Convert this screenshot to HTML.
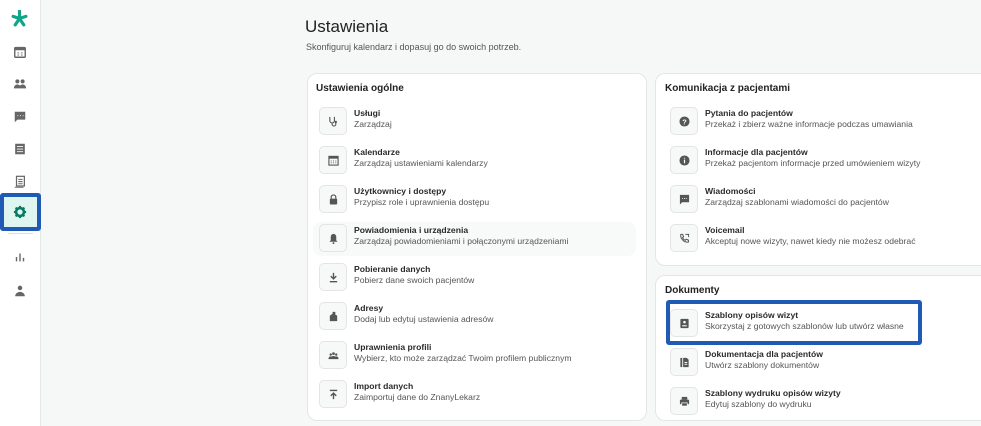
<!DOCTYPE html><html><head><meta charset="utf-8"><style>
*{margin:0;padding:0;box-sizing:border-box}
html,body{width:981px;height:426px;overflow:hidden}
body{background:#f6f7f7;font-family:"Liberation Sans",sans-serif;color:#222;position:relative}
.side{position:absolute;left:0;top:0;width:41px;height:426px;background:#fff;border-right:1px solid #e6e8e8}
.si{position:absolute;left:13px;width:14px;height:14px}
.card{position:absolute;background:#fff;border:1px solid #e4e6e6;border-radius:10px}
.h{position:absolute;font-size:10px;font-weight:bold;color:#222}
.it{position:absolute;height:30px}
.ib{position:absolute;left:0;top:0;width:28px;height:28px;border:1px solid #e3e5e5;border-radius:5px;background:#f7f8f8}
.ib svg{position:absolute;left:8px;top:8px;width:11px;height:11px}
.t{position:absolute;left:35px;top:1px;font-size:8.6px;font-weight:bold;white-space:nowrap;color:#2a2a2a}
.d{position:absolute;left:35px;top:12px;font-size:8.6px;color:#555;white-space:nowrap}
</style></head><body>
<div class="side">
<svg class="si" style="top:10px;left:11px;width:17px;height:17px" viewBox="0 0 16 16"><path d="M8 1v6M2 6l6 2 6-2M8 8l-4 6M8 8l4 6" stroke="#12a38a" stroke-width="3" stroke-linecap="round" fill="none"/></svg>
<svg class="si" style="top:45px" viewBox="0 0 16 16"><rect x="2" y="3" width="12" height="11" rx="1" fill="none" stroke="#666" stroke-width="1.6"/><rect x="2" y="3" width="12" height="3" fill="#666"/><path d="M5 9h2M9 9h2M5 11.5h2M9 11.5h2" stroke="#666"/></svg>
<svg class="si" style="top:77px" viewBox="0 0 16 16"><circle cx="5" cy="5" r="2.3" fill="#666"/><circle cx="11" cy="5" r="2.3" fill="#666"/><path d="M1 13c0-3 2-4.5 4-4.5s4 1.5 4 4.5zM7 13c0-3 2-4.5 4-4.5s4 1.5 4 4.5z" fill="#666"/></svg>
<svg class="si" style="top:110px" viewBox="0 0 16 16"><path d="M2 2h12v9H5l-3 3z" fill="#666"/><path d="M5 6.5h1M8 6.5h1M11 6.5h1" stroke="#fff"/></svg>
<svg class="si" style="top:142px" viewBox="0 0 16 16"><rect x="2.5" y="2" width="11" height="12" fill="#666"/><path d="M4.5 5h7M4.5 8h7M4.5 11h7" stroke="#fff"/></svg>
<svg class="si" style="top:175px" viewBox="0 0 16 16"><rect x="4" y="1.5" width="9" height="11" fill="none" stroke="#666" stroke-width="1.4"/><path d="M2 14h10M6 5h5M6 7.5h5M6 10h5" stroke="#666" stroke-width="1.2"/></svg>
<div style="position:absolute;left:0;top:193px;width:41px;height:38px;border:4px solid #1f5bb5;border-radius:3px;background:#dff5ef"></div>
<svg class="si" style="top:205px" viewBox="0 0 16 16"><circle cx="8" cy="8" r="4.5" fill="none" stroke="#0b7a63" stroke-width="3"/><path d="M8 1v3M8 12v3M1 8h3M12 8h3M3 3l2 2M11 11l2 2M13 3l-2 2M5 11l-2 2" stroke="#0b7a63" stroke-width="2.4"/></svg>
<div style="position:absolute;left:8px;top:233px;width:25px;height:1px;background:#ddd"></div>
<svg class="si" style="top:250px" viewBox="0 0 16 16"><path d="M4 13V8M8 13V4M12 13V9" stroke="#666" stroke-width="1.6"/></svg>
<svg class="si" style="top:284px" viewBox="0 0 16 16"><circle cx="8" cy="4.5" r="2.6" fill="#666"/><path d="M2.5 14c0-3 2.5-5 5.5-5s5.5 2 5.5 5z" fill="#666"/></svg>
</div>
<div style="position:absolute;left:305px;top:17px;font-size:17px;color:#222">Ustawienia</div>
<div style="position:absolute;left:306px;top:42px;font-size:9px;color:#555">Skonfiguruj kalendarz i dopasuj go do swoich potrzeb.</div>

<div class="card" style="left:307px;top:73px;width:340px;height:348px"></div>
<div class="h" style="left:316px;top:83px">Ustawienia ogólne</div>
<div style="position:absolute;left:313px;top:222px;width:323px;height:34px;background:#f8f9f9;border-radius:8px"></div>

<div class="card" style="left:655px;top:73px;width:340px;height:193px"></div>
<div class="h" style="left:665px;top:83px">Komunikacja z pacjentami</div>
<div class="card" style="left:655px;top:275px;width:340px;height:146px"></div>
<div class="h" style="left:665px;top:285px">Dokumenty</div>
<div style="position:absolute;left:666px;top:300px;width:256px;height:45px;border:4px solid #1f5bb5;border-radius:3px;background:#fff"></div>

<div class="it" style="left:319px;top:107px"><div class="ib"><svg viewBox="0 0 12 12"><path d="M2 1v4a2.5 2.5 0 005 0V1M4.5 7.5v1.5a2 2 0 004 0V7" fill="none" stroke="#555" stroke-width="1.2"/><circle cx="8.5" cy="6.5" r="1.3" fill="#555"/></svg></div><div class="t">Usługi</div><div class="d">Zarządzaj</div></div>
<div class="it" style="left:319px;top:146px"><div class="ib"><svg viewBox="0 0 12 12"><rect x="1" y="1.5" width="10" height="9.5" fill="none" stroke="#555" stroke-width="1.2"/><rect x="1" y="1.5" width="10" height="2.5" fill="#555"/><path d="M3 6.5h1M5.5 6.5h1M8 6.5h1M3 8.5h1M5.5 8.5h1M8 8.5h1" stroke="#555"/></svg></div><div class="t">Kalendarze</div><div class="d">Zarządzaj ustawieniami kalendarzy</div></div>
<div class="it" style="left:319px;top:185px"><div class="ib"><svg viewBox="0 0 12 12"><path d="M3.5 5V3.5a2.5 2.5 0 015 0V5" fill="none" stroke="#555" stroke-width="1.3"/><rect x="2" y="5" width="8" height="6.5" rx="1" fill="#555"/></svg></div><div class="t">Użytkownicy i dostępy</div><div class="d">Przypisz role i uprawnienia dostępu</div></div>
<div class="it" style="left:319px;top:224px"><div class="ib"><svg viewBox="0 0 12 12"><path d="M6 1a3 3 0 013 3v4l1.5 1.5h-9L3 8V4a3 3 0 013-3z" fill="#555"/><circle cx="6" cy="11" r="1" fill="#555"/></svg></div><div class="t">Powiadomienia i urządzenia</div><div class="d">Zarządzaj powiadomieniami i połączonymi urządzeniami</div></div>
<div class="it" style="left:319px;top:263px"><div class="ib"><svg viewBox="0 0 12 12"><path d="M6 1v6M3 4.5L6 7.5 9 4.5M2 10.5h8" fill="none" stroke="#555" stroke-width="1.5"/></svg></div><div class="t">Pobieranie danych</div><div class="d">Pobierz dane swoich pacjentów</div></div>
<div class="it" style="left:319px;top:302px"><div class="ib"><svg viewBox="0 0 12 12"><path d="M2 11V5l3-2V1h3v3l2 1v6z" fill="#555"/></svg></div><div class="t">Adresy</div><div class="d">Dodaj lub edytuj ustawienia adresów</div></div>
<div class="it" style="left:319px;top:341px"><div class="ib"><svg viewBox="0 0 12 12"><circle cx="3" cy="5" r="1.3" fill="#555"/><circle cx="6" cy="4" r="1.5" fill="#555"/><circle cx="9" cy="5" r="1.3" fill="#555"/><path d="M0.5 10c0-2 1-3 2.5-3s2.5 1 2.5 3zM3.5 10c0-2.5 1-3.5 2.5-3.5s2.5 1 2.5 3.5zM6.5 10c0-2 1-3 2.5-3s2.5 1 2.5 3z" fill="#555"/></svg></div><div class="t">Uprawnienia profili</div><div class="d">Wybierz, kto może zarządzać Twoim profilem publicznym</div></div>
<div class="it" style="left:319px;top:380px"><div class="ib"><svg viewBox="0 0 12 12"><path d="M2 1.5h8M6 11V4.5M3 7.5L6 4.5 9 7.5" fill="none" stroke="#555" stroke-width="1.5"/></svg></div><div class="t">Import danych</div><div class="d">Zaimportuj dane do ZnanyLekarz</div></div>

<div class="it" style="left:670px;top:107px"><div class="ib"><svg viewBox="0 0 12 12"><circle cx="6" cy="6" r="5.5" fill="#555"/><text x="6" y="9" font-size="8" font-weight="bold" fill="#fff" text-anchor="middle" font-family="Liberation Sans">?</text></svg></div><div class="t">Pytania do pacjentów</div><div class="d">Przekaż i zbierz ważne informacje podczas umawiania</div></div>
<div class="it" style="left:670px;top:146px"><div class="ib"><svg viewBox="0 0 12 12"><circle cx="6" cy="6" r="5.5" fill="#555"/><path d="M6 5v4M6 3v1" stroke="#fff" stroke-width="1.3"/></svg></div><div class="t">Informacje dla pacjentów</div><div class="d">Przekaż pacjentom informacje przed umówieniem wizyty</div></div>
<div class="it" style="left:670px;top:185px"><div class="ib"><svg viewBox="0 0 12 12"><path d="M1 1h10v8H3.5L1 11.5z" fill="#555"/><path d="M3.5 5h1M5.5 5h1M7.5 5h1" stroke="#fff"/></svg></div><div class="t">Wiadomości</div><div class="d">Zarządzaj szablonami wiadomości do pacjentów</div></div>
<div class="it" style="left:670px;top:224px"><div class="ib"><svg viewBox="0 0 12 12"><path d="M2 1.5l2 0 1 2.5-1.2 1a6 6 0 003 3l1-1.2 2.5 1v2C6 11 1 6 2 1.5z" fill="none" stroke="#555" stroke-width="1.1"/><path d="M7 1.5h3.5v3" fill="none" stroke="#555"/></svg></div><div class="t">Voicemail</div><div class="d">Akceptuj nowe wizyty, nawet kiedy nie możesz odebrać</div></div>

<div class="it" style="left:670px;top:309px"><div class="ib"><svg viewBox="0 0 12 12"><rect x="1.5" y="1" width="9" height="10" rx="1" fill="#555"/><circle cx="6" cy="4.5" r="1.4" fill="#fff"/><path d="M3.5 8.5h5" stroke="#fff" stroke-width="1.2"/></svg></div><div class="t">Szablony opisów wizyt</div><div class="d">Skorzystaj z gotowych szablonów lub utwórz własne</div></div>
<div class="it" style="left:670px;top:348px"><div class="ib"><svg viewBox="0 0 12 12"><rect x="1.5" y="1" width="2" height="10" fill="#555"/><path d="M4.5 1h4l2 2v8h-6z" fill="#555"/><path d="M6 6h3M6 8h3" stroke="#fff"/></svg></div><div class="t">Dokumentacja dla pacjentów</div><div class="d">Utwórz szablony dokumentów</div></div>
<div class="it" style="left:670px;top:387px"><div class="ib"><svg viewBox="0 0 12 12"><rect x="3" y="1" width="6" height="3" fill="#555"/><rect x="1" y="4" width="10" height="5" rx="1" fill="#555"/><rect x="3" y="7.5" width="6" height="3.5" fill="#555" stroke="#fff" stroke-width=".8"/></svg></div><div class="t">Szablony wydruku opisów wizyty</div><div class="d">Edytuj szablony do wydruku</div></div>
</body></html>
